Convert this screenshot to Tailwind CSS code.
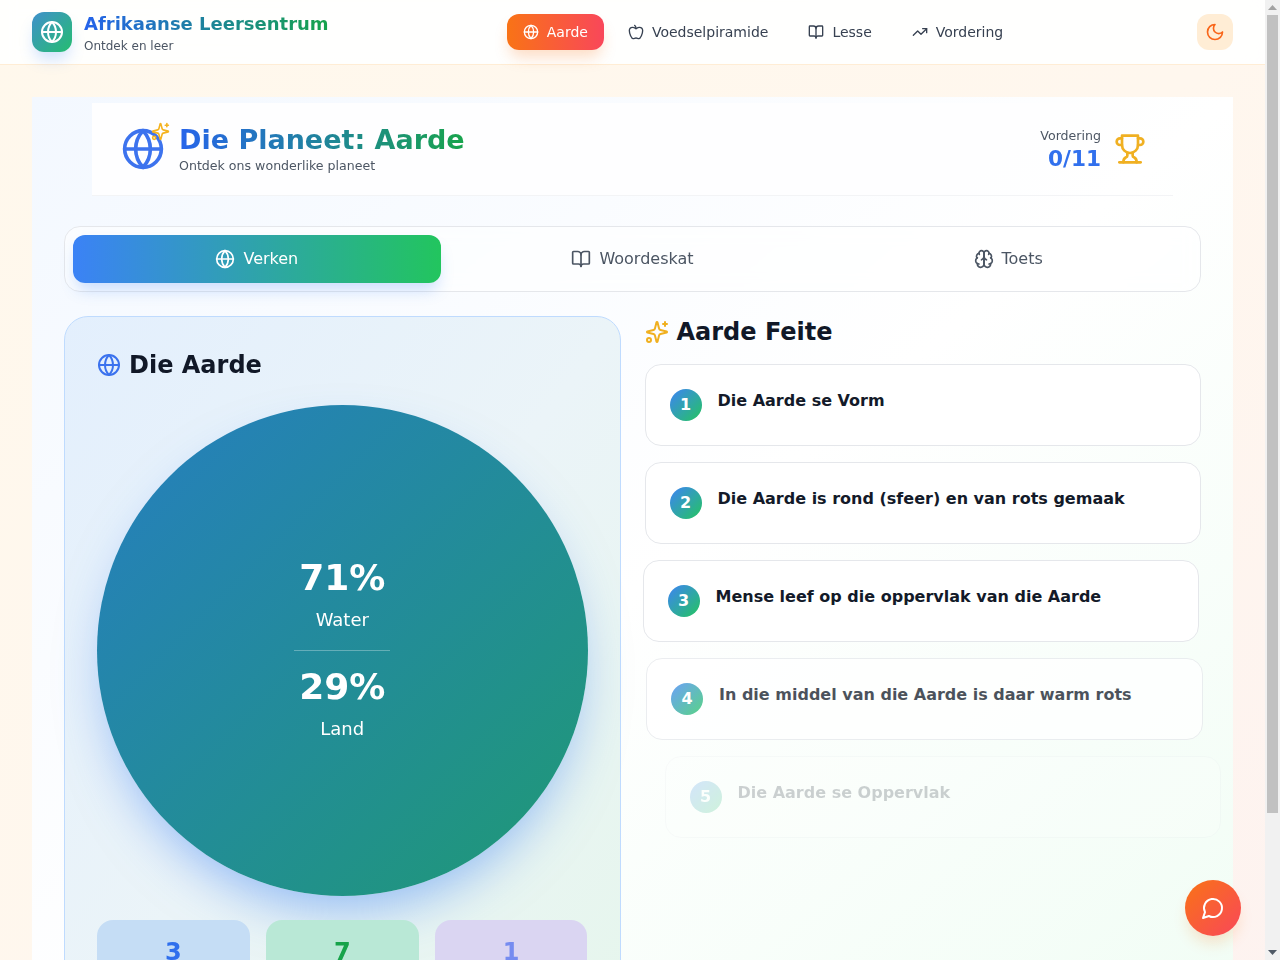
<!DOCTYPE html>
<html lang="af" class="overflow-x-hidden">
<head>
<meta charset="utf-8">
<title>Afrikaanse Leersentrum</title>
<script src="https://cdn.jsdelivr.net/npm/@tailwindcss/browser@4"></script>
</head>
<body class="min-h-screen bg-linear-to-br/srgb from-[#fff8ec] via-[#fff7ee] to-[#fdf2f0] font-['DejaVu_Sans',sans-serif] text-[#111827]">
<div class="w-[1265px]">
<header class="h-[65px] bg-white/90 backdrop-blur-sm border-b border-[#ffedd5] px-8 flex items-center justify-between">
  <div class="flex items-center gap-3 w-[300px]">
    <div class="w-10 h-10 rounded-xl bg-linear-to-br/srgb from-[#4090cc] to-[#25bd70] flex items-center justify-center text-white shadow-[0_10px_15px_-3px_rgba(59,130,246,0.25)]">
      <svg class="w-6 h-6" viewBox="0 0 24 24" fill="none" stroke="currentColor" stroke-width="2" stroke-linecap="round" stroke-linejoin="round"><circle cx="12" cy="12" r="10"/><path d="M12 2a14.5 14.5 0 0 0 0 20 14.5 14.5 0 0 0 0-20"/><path d="M2 12h20"/></svg>
    </div>
    <div>
      <div class="text-lg leading-7 font-bold whitespace-nowrap bg-linear-to-r/srgb from-[#2563eb] to-[#16a34a] bg-clip-text text-transparent">Afrikaanse Leersentrum</div>
      <div class="text-xs leading-4 text-[#4b5563]">Ontdek en leer</div>
    </div>
  </div>
  <nav class="flex items-center gap-2 text-sm leading-5 text-[#374151] ml-[-3px]">
    <a class="flex items-center gap-2 px-4 py-2 rounded-xl text-white bg-linear-to-r/srgb from-[#f97316] to-[#f9475a] shadow-[0_10px_15px_-3px_rgba(249,115,22,0.25)]">
      <svg class="w-4 h-4" viewBox="0 0 24 24" fill="none" stroke="currentColor" stroke-width="2" stroke-linecap="round" stroke-linejoin="round"><circle cx="12" cy="12" r="10"/><path d="M12 2a14.5 14.5 0 0 0 0 20 14.5 14.5 0 0 0 0-20"/><path d="M2 12h20"/></svg>Aarde</a>
    <a class="flex items-center gap-2 px-4 py-2 rounded-xl">
      <svg class="w-4 h-4" viewBox="0 0 24 24" fill="none" stroke="currentColor" stroke-width="2" stroke-linecap="round" stroke-linejoin="round"><path d="M12 20.94c1.5 0 2.75 1.06 4 1.06 3 0 6-8 6-12.22A4.91 4.91 0 0 0 17 5c-2.22 0-4 1.44-5 2-1-.56-2.78-2-5-2a4.9 4.9 0 0 0-5 4.78C2 14 5 22 8 22c1.25 0 2.5-1.06 4-1.06Z"/><path d="M10 2c1 .5 2 2 2 5"/></svg>Voedselpiramide</a>
    <a class="flex items-center gap-2 px-4 py-2 rounded-xl">
      <svg class="w-4 h-4" viewBox="0 0 24 24" fill="none" stroke="currentColor" stroke-width="2" stroke-linecap="round" stroke-linejoin="round"><path d="M12 7v14"/><path d="M3 18a1 1 0 0 1-1-1V4a1 1 0 0 1 1-1h5a4 4 0 0 1 4 4 4 4 0 0 1 4-4h5a1 1 0 0 1 1 1v13a1 1 0 0 1-1 1h-6a3 3 0 0 0-3 3 3 3 0 0 0-3-3z"/></svg>Lesse</a>
    <a class="flex items-center gap-2 px-4 py-2 rounded-xl">
      <svg class="w-4 h-4" viewBox="0 0 24 24" fill="none" stroke="currentColor" stroke-width="2" stroke-linecap="round" stroke-linejoin="round"><path d="M16 7h6v6"/><path d="m22 7-8.5 8.5-5-5L2 17"/></svg>Vordering</a>
  </nav>
  <button class="w-9 h-9 rounded-xl bg-[#ffedd5] flex items-center justify-center text-[#f9661a]">
    <svg class="w-5 h-5" viewBox="0 0 24 24" fill="none" stroke="currentColor" stroke-width="2" stroke-linecap="round" stroke-linejoin="round"><path d="M12 3a6 6 0 0 0 9 9 9 9 0 1 1-9-9Z"/></svg>
  </button>
</header>

<main class="px-8 py-8">
  <div class="bg-linear-to-br/srgb from-[#f3f8ff] via-[#ffffff] to-[#f0fdf4] px-8 pb-8 pt-[6px]">
    <div class="mx-[28px] h-[93px] bg-white border-b border-[#f3f4f6] flex items-center justify-between pl-[29px] pr-[27px] mb-[30px] opacity-[0.99]">
      <div class="flex items-center gap-[14px]">
        <div class="relative w-[44px] h-[44px] text-[#3b72ee]">
          <svg class="w-[44px] h-[44px]" viewBox="0 0 24 24" fill="none" stroke="currentColor" stroke-width="2" stroke-linecap="round" stroke-linejoin="round"><circle cx="12" cy="12" r="10"/><path d="M12 2a14.5 14.5 0 0 0 0 20 14.5 14.5 0 0 0 0-20"/><path d="M2 12h20"/></svg>
          <svg class="absolute top-[-5px] right-[-5px] w-[19px] h-[19px] text-[#f5b31e]" viewBox="0 0 24 24" fill="none" stroke="currentColor" stroke-width="2" stroke-linecap="round" stroke-linejoin="round"><path d="M9.937 15.5A2 2 0 0 0 8.5 14.063l-6.135-1.582a.5.5 0 0 1 0-.962L8.5 9.936A2 2 0 0 0 9.937 8.5l1.582-6.135a.5.5 0 0 1 .963 0L14.063 8.5A2 2 0 0 0 15.5 9.937l6.135 1.581a.5.5 0 0 1 0 .964L15.5 14.063a2 2 0 0 0-1.437 1.437l-1.582 6.135a.5.5 0 0 1-.963 0z"/><path d="M20 2v4"/><path d="M22 4h-4"/><circle cx="4" cy="20" r="2"/></svg>
        </div>
        <div>
          <h1 class="text-[27px] leading-[32px] font-bold whitespace-nowrap bg-linear-to-r/srgb from-[#2563eb] to-[#16a34a] bg-clip-text text-transparent">Die Planeet: Aarde</h1>
          <p class="text-[12.6px] leading-[18px] mt-px text-[#4b5563]">Ontdek ons wonderlike planeet</p>
        </div>
      </div>
      <div class="flex items-center gap-[13px]">
        <div class="text-right">
          <div class="text-[12.6px] leading-[18px] text-[#4b5563]">Vordering</div>
          <div class="text-[21.6px] leading-[27px] font-bold text-[#2f6fed]">0/11</div>
        </div>
        <svg class="w-[32px] h-[32px] text-[#f0b020]" viewBox="0 0 24 24" fill="none" stroke="currentColor" stroke-width="2" stroke-linecap="round" stroke-linejoin="round"><path d="M6 9H4.5a2.5 2.5 0 0 1 0-5H6"/><path d="M18 9h1.5a2.5 2.5 0 0 0 0-5H18"/><path d="M4 22h16"/><path d="M10 14.66V17c0 .55-.47.98-.97 1.21C7.85 18.75 7 20.24 7 22"/><path d="M14 14.66V17c0 .55.47.98.97 1.21C16.15 18.75 17 20.24 17 22"/><path d="M18 2H6v7a6 6 0 0 0 12 0V2Z"/></svg>
      </div>
    </div>

    <div class="grid grid-cols-3 gap-2 p-2 rounded-2xl border border-[#e5e7eb] bg-white/50 backdrop-blur-sm mb-6 text-[#4b5563]">
      <button class="h-12 rounded-xl flex items-center justify-center gap-2 text-white bg-linear-to-r/srgb from-[#3b82f6] to-[#22c55e] shadow-[0_10px_15px_-3px_rgba(59,130,246,0.25)]">
        <svg class="w-5 h-5" viewBox="0 0 24 24" fill="none" stroke="currentColor" stroke-width="2" stroke-linecap="round" stroke-linejoin="round"><circle cx="12" cy="12" r="10"/><path d="M12 2a14.5 14.5 0 0 0 0 20 14.5 14.5 0 0 0 0-20"/><path d="M2 12h20"/></svg>Verken</button>
      <button class="h-12 rounded-xl flex items-center justify-center gap-2">
        <svg class="w-5 h-5" viewBox="0 0 24 24" fill="none" stroke="currentColor" stroke-width="2" stroke-linecap="round" stroke-linejoin="round"><path d="M12 7v14"/><path d="M3 18a1 1 0 0 1-1-1V4a1 1 0 0 1 1-1h5a4 4 0 0 1 4 4 4 4 0 0 1 4-4h5a1 1 0 0 1 1 1v13a1 1 0 0 1-1 1h-6a3 3 0 0 0-3 3 3 3 0 0 0-3-3z"/></svg>Woordeskat</button>
      <button class="h-12 rounded-xl flex items-center justify-center gap-2">
        <svg class="w-5 h-5" viewBox="0 0 24 24" fill="none" stroke="currentColor" stroke-width="2" stroke-linecap="round" stroke-linejoin="round"><path d="M12 5a3 3 0 1 0-5.997.125 4 4 0 0 0-2.526 5.77 4 4 0 0 0 .556 6.588A4 4 0 1 0 12 18Z"/><path d="M12 5a3 3 0 1 1 5.997.125 4 4 0 0 1 2.526 5.77 4 4 0 0 1-.556 6.588A4 4 0 1 1 12 18Z"/><path d="M15 13a4.5 4.5 0 0 1-3-4 4.5 4.5 0 0 1-3 4"/><path d="M17.599 6.5a3 3 0 0 0 .399-1.375"/><path d="M6.003 5.125A3 3 0 0 0 6.401 6.5"/><path d="M3.477 10.896a4 4 0 0 1 .585-.396"/><path d="M19.938 10.5a4 4 0 0 1 .585.396"/><path d="M6 18a4 4 0 0 1-1.967-.516"/><path d="M19.967 17.484A4 4 0 0 1 18 18"/></svg>Toets</button>
    </div>

    <div class="grid grid-cols-2 gap-6 items-start">
      <section class="rounded-3xl border border-[#bfdbfe] bg-linear-to-br/srgb from-[#e3effd] via-[#ebf4f8] to-[#e6f6ec] p-8 backdrop-blur-sm">
        <h2 class="flex items-center gap-2 text-2xl leading-8 font-bold mb-6">
          <svg class="w-6 h-6 text-[#3b72ee]" viewBox="0 0 24 24" fill="none" stroke="currentColor" stroke-width="2" stroke-linecap="round" stroke-linejoin="round"><circle cx="12" cy="12" r="10"/><path d="M12 2a14.5 14.5 0 0 0 0 20 14.5 14.5 0 0 0 0-20"/><path d="M2 12h20"/></svg>Die Aarde</h2>
        <div class="w-full aspect-square rounded-full bg-linear-to-br/srgb from-[#267ec0] to-[#1f9974] shadow-[0_25px_50px_-12px_rgba(59,130,246,0.5)] flex flex-col items-center justify-center text-white mb-6">
          <div class="text-4xl leading-10 font-bold">71%</div>
          <div class="text-lg leading-7 mt-2">Water</div>
          <div class="w-24 h-px bg-white/30 my-4"></div>
          <div class="text-4xl leading-10 font-bold">29%</div>
          <div class="text-lg leading-7 mt-2">Land</div>
        </div>
        <div class="grid grid-cols-3 gap-4 text-center">
          <div class="rounded-2xl bg-[#c5ddf5] p-4"><div class="text-2xl leading-8 font-bold text-[#2f6fed]">3</div><div class="text-sm text-[#4b5563] pb-[18px]">Lae</div></div>
          <div class="rounded-2xl bg-[#b9e8d6] p-4"><div class="text-2xl leading-8 font-bold text-[#16a34a]">7</div><div class="text-sm text-[#4b5563] pb-[18px]">Kontinente</div></div>
          <div class="rounded-2xl bg-[#dad5f2] p-4"><div class="text-2xl leading-8 font-bold text-[#768cf0]">1</div><div class="text-sm text-[#4b5563] pb-[18px]">Maan</div></div>
        </div>
      </section>

      <section>
        <h2 class="flex items-center gap-2 text-2xl leading-8 font-bold mb-4">
          <svg class="w-6 h-6 text-[#f0b020]" viewBox="0 0 24 24" fill="none" stroke="currentColor" stroke-width="2" stroke-linecap="round" stroke-linejoin="round"><path d="M9.937 15.5A2 2 0 0 0 8.5 14.063l-6.135-1.582a.5.5 0 0 1 0-.962L8.5 9.936A2 2 0 0 0 9.937 8.5l1.582-6.135a.5.5 0 0 1 .963 0L14.063 8.5A2 2 0 0 0 15.5 9.937l6.135 1.581a.5.5 0 0 1 0 .964L15.5 14.063a2 2 0 0 0-1.437 1.437l-1.582 6.135a.5.5 0 0 1-.963 0z"/><path d="M20 2v4"/><path d="M22 4h-4"/><circle cx="4" cy="20" r="2"/></svg>Aarde Feite</h2>
        <div class="flex flex-col gap-4">
          <div class="rounded-2xl border border-[#e5e7eb] bg-white p-6 flex items-start gap-4 opacity-[0.99]">
            <div class="w-8 h-8 shrink-0 rounded-full bg-linear-to-br/srgb from-[#3b82f6] to-[#22c55e] text-white font-bold flex items-center justify-center">1</div>
            <div class="font-bold leading-6">Die Aarde se Vorm</div>
          </div>
          <div class="rounded-2xl border border-[#e5e7eb] bg-white p-6 flex items-start gap-4 opacity-[0.99]">
            <div class="w-8 h-8 shrink-0 rounded-full bg-linear-to-br/srgb from-[#3b82f6] to-[#22c55e] text-white font-bold flex items-center justify-center">2</div>
            <div class="font-bold leading-6">Die Aarde is rond (sfeer) en van rots gemaak</div>
          </div>
          <div class="rounded-2xl border border-[#e5e7eb] bg-white p-6 flex items-start gap-4 ml-[-2px] mr-[2px] opacity-[0.99]">
            <div class="w-8 h-8 shrink-0 rounded-full bg-linear-to-br/srgb from-[#3b82f6] to-[#22c55e] text-white font-bold flex items-center justify-center">3</div>
            <div class="font-bold leading-6">Mense leef op die oppervlak van die Aarde</div>
          </div>
          <div class="rounded-2xl border border-[#e5e7eb] bg-white p-6 flex items-start gap-4 ml-[1.5px] mr-[-1.5px] opacity-75">
            <div class="w-8 h-8 shrink-0 rounded-full bg-linear-to-br/srgb from-[#3b82f6] to-[#22c55e] text-white font-bold flex items-center justify-center">4</div>
            <div class="font-bold leading-6">In die middel van die Aarde is daar warm rots</div>
          </div>
          <div class="rounded-2xl border border-[#e5e7eb] bg-white p-6 flex items-start gap-4 ml-[20px] mr-[-20px] opacity-20">
            <div class="w-8 h-8 shrink-0 rounded-full bg-linear-to-br/srgb from-[#3b82f6] to-[#22c55e] text-white font-bold flex items-center justify-center">5</div>
            <div class="font-bold leading-6">Die Aarde se Oppervlak</div>
          </div>
        </div>
      </section>
    </div>
  </div>
</main>
</div>

<button class="fixed right-[39px] bottom-6 w-14 h-14 rounded-full bg-linear-to-br/srgb from-[#f97316] to-[#f9475a] text-white flex items-center justify-center shadow-[0_10px_15px_-3px_rgba(249,115,22,0.2)]">
  <svg class="w-6 h-6" viewBox="0 0 24 24" fill="none" stroke="currentColor" stroke-width="2" stroke-linecap="round" stroke-linejoin="round"><path d="M7.9 20A9 9 0 1 0 4 16.1L2 22Z"/></svg>
</button>

<div class="fixed top-0 right-0 bottom-0 w-[15px] bg-[#f1f1f1] flex flex-col items-center">
  <div class="h-[15px] w-full flex items-center justify-center">
    <svg class="w-[9px] h-[5px] text-[#a3a3a3]" viewBox="0 0 9 5" fill="currentColor"><path d="M4.5 0 9 5H0Z"/></svg>
  </div>
  <div class="w-[11px] h-[798px] bg-[#c1c1c1]"></div>
  <div class="mt-auto h-[15px] w-full flex items-center justify-center">
    <svg class="w-[9px] h-[5px] text-[#505a66]" viewBox="0 0 9 5" fill="currentColor"><path d="M0 0H9L4.5 5Z"/></svg>
  </div>
</div>
</body>
</html>
